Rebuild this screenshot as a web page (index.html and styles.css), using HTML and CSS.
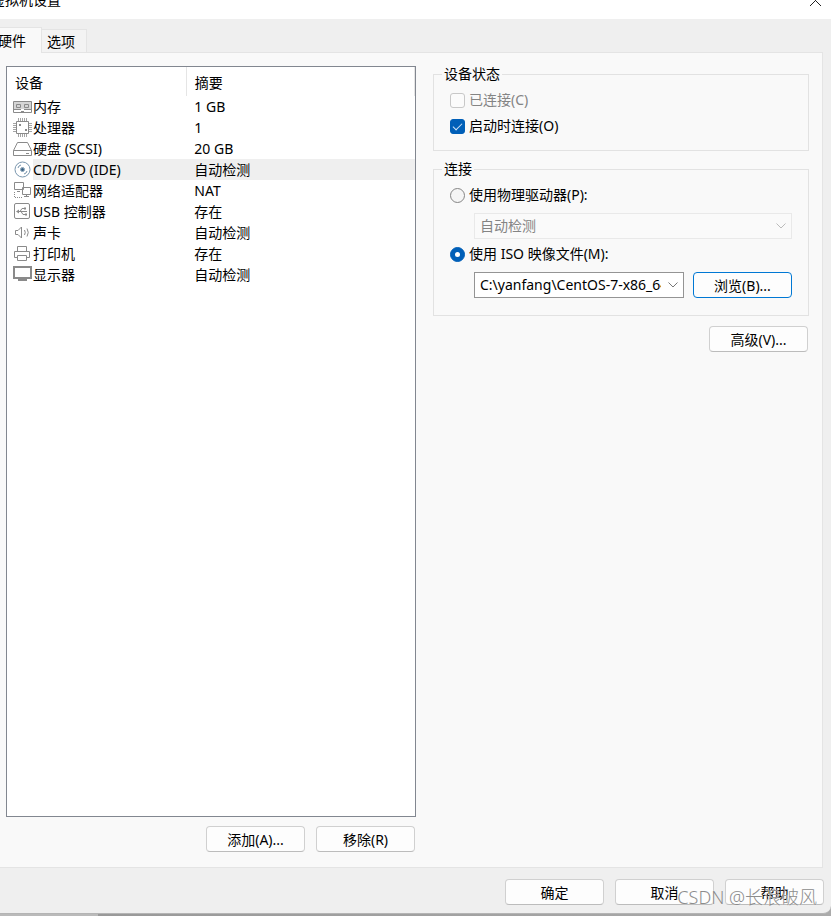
FILE: index.html
```html
<!DOCTYPE html>
<html lang="zh-CN">
<head>
<meta charset="utf-8">
<title>虚拟机设置</title>
<link rel="stylesheet" href="styles.css">
</head>
<body>
<main class="dialog">
  <header class="titlebar">
    <h1 class="title">虚拟机设置</h1>
    <button class="close" type="button" aria-label="关闭"><svg width="13" height="13" viewBox="0 0 13 13"><path d="M1 1L12 12M12 1L1 12"/></svg></button>
  </header>
  <nav class="tabs">
    <button class="tab tab-active" type="button">硬件</button>
    <button class="tab" type="button">选项</button>
  </nav>
  <div class="panel">
    <section class="hardware">
      <div class="list">
        <table class="devices">
          <thead><tr><th class="name-col">设备</th><th class="summary-col">摘要</th></tr></thead>
          <tbody>
            <tr><td><div class="device"><svg class="icon" viewBox="0 0 20 20"><path class="fill" d="M1 4H19V12H1Z"/><path d="M0.500 4.500H18.500V15.500H0.500ZM3.500 7.500H7.500V10.500H3.500ZM11.500 7.500H15.500V10.500H11.500ZM1 12.500H8M11 12.500H18M8 14.500H11"/></svg><span class="label">内存</span></div></td><td>1 GB</td></tr>
            <tr><td><div class="device"><svg class="icon" viewBox="0 0 20 20"><path d="M3.500 3.500H15.500V15.500H3.500Z"/><path class="pins" d="M5.500 0V3M7.500 0V3M9.500 0V3M11.500 0V3M13.500 0V3M5.500 16V19M7.500 16V19M9.500 16V19M11.500 16V19M13.500 16V19M0 5.500H3M0 7.500H3M0 9.500H3M0 11.500H3M0 13.500H3M16 5.500H19M16 7.500H19M16 9.500H19M16 11.500H19M16 13.500H19"/><path class="fill-dark" d="M6 6H8V8H6ZM12 11H14V13H12Z"/></svg><span class="label">处理器</span></div></td><td>1</td></tr>
            <tr><td><div class="device"><svg class="icon" viewBox="0 0 20 20"><path d="M4.500 3.500H14.500L18.500 11.500V16.500H0.500V11.500ZM0.500 11.500H18.500M13 14.500H16"/></svg><span class="label">硬盘 (SCSI)</span></div></td><td>20 GB</td></tr>
            <tr class="selected"><td><div class="device"><svg class="icon disc" viewBox="0 0 20 20"><circle cx="9.500" cy="9.500" r="7.500"/><circle cx="9.500" cy="9.500" r="2"/><path d="M5 8Q5.500 5.500 8 5M14 11Q13.500 13.500 11 14"/><circle class="dot" cx="9.500" cy="9.500" r="1.500"/></svg><span class="label">CD/DVD (IDE)</span></div></td><td>自动检测</td></tr>
            <tr><td><div class="device"><svg class="icon" viewBox="0 0 20 20"><path d="M1.500 1.500H10.500V8.500H1.500ZM4 10.500H7M9.500 6.500H17.500V13.500H9.500Z"/><path d="M11 15.500H16M13.500 14V15"/><path class="dash" d="M1.500 11V16.500H10"/></svg><span class="label">网络适配器</span></div></td><td>NAT</td></tr>
            <tr><td><div class="device"><svg class="icon" viewBox="0 0 20 20"><rect x="1.500" y="1.500" width="15" height="15" rx="1.500"/><path d="M4 9.500H14M7 9.500L9 6.500H11M8 9.500L10 12.500H12"/><path class="fill-dark" d="M3 9.500L6 7.500V11.500ZM11 5.500H13V7.500H11ZM12 11.500H14V13.500H12Z"/></svg><span class="label">USB 控制器</span></div></td><td>存在</td></tr>
            <tr><td><div class="device"><svg class="icon" viewBox="0 0 20 20"><path d="M2.500 7.500H5L8.500 4V15L5 11.500H2.500ZM11.500 7Q13 9.500 11.500 12M14 5.500Q16.500 9.500 14 13.500"/></svg><span class="label">声卡</span></div></td><td>自动检测</td></tr>
            <tr><td><div class="device"><svg class="icon" viewBox="0 0 20 20"><path d="M4.500 7V2.500H13.500V7M4 13.500H1.500V7.500H16.500V13.500H14M4.500 11.500H13.500V16.500H4.500Z"/></svg><span class="label">打印机</span></div></td><td>存在</td></tr>
            <tr><td><div class="device"><svg class="icon" viewBox="0 0 20 20"><path class="thick" d="M1 2H18V13H1Z"/><path class="thick" d="M5 15H14"/></svg><span class="label">显示器</span></div></td><td>自动检测</td></tr>
          </tbody>
        </table>
      </div>
      <div class="actions">
        <button class="btn" type="button">添加(A)...</button>
        <button class="btn" type="button">移除(R)</button>
      </div>
    </section>
    <section class="settings">
      <fieldset class="group status">
        <legend>设备状态</legend>
        <label class="choice disabled"><input type="checkbox" disabled>已连接(C)</label>
        <label class="choice"><input type="checkbox" checked>启动时连接(O)</label>
      </fieldset>
      <fieldset class="group connection">
        <legend>连接</legend>
        <label class="choice"><input type="radio" name="source">使用物理驱动器(P):</label>
        <div class="source-row">
          <div class="combo combo-disabled">
            <select aria-label="物理驱动器" disabled><option>自动检测</option></select>
            <svg class="arrow" width="10" height="6" viewBox="0 0 10 6"><path d="M0.500 0.500L5 5L9.500 0.500"/></svg>
          </div>
        </div>
        <label class="choice"><input type="radio" name="source" checked>使用 ISO 映像文件(M):</label>
        <div class="source-row">
          <div class="combo">
            <select aria-label="ISO 映像文件"><option>C:\yanfang\CentOS-7-x86_64</option></select>
            <svg class="arrow" width="10" height="6" viewBox="0 0 10 6"><path d="M0.500 0.500L5 5L9.500 0.500"/></svg>
          </div>
          <button class="btn btn-focus" type="button">浏览(B)...</button>
        </div>
      </fieldset>
      <button class="btn advanced" type="button">高级(V)...</button>
    </section>
  </div>
  <footer class="footer">
    <button class="btn" type="button">确定</button>
    <button class="btn" type="button">取消</button>
    <button class="btn" type="button">帮助</button>
    <span class="watermark">CSDN @长浪破风</span>
  </footer>
</main>
</body>
</html>
```
FILE: styles.css
```css
* { box-sizing: border-box; }

body {
  margin: 0;
  height: 100vh;
  padding-bottom: 2px;
  overflow: hidden;
  background: linear-gradient(90deg, #bababa 98px, #999 98px, #ababab);
  color: #000;
  font: 14px/20px "Noto Sans", "Noto Sans CJK SC", sans-serif;
}

button, select, input { font: inherit; color: inherit; margin: 0; }

.dialog {
  position: relative;
  display: flex;
  flex-direction: column;
  height: 100%;
  overflow: hidden;
  background: #efefef;
  border-bottom: 1px solid #b4b4b4;
  border-bottom-right-radius: 8px;
}

.titlebar {
  display: flex;
  flex: none;
  justify-content: space-between;
  align-items: flex-end;
  height: 19px;
  padding: 0 9px 9px 0;
  background: #fff;
}

.title { margin: 0 0 0 -9px; font: inherit; }

.close {
  display: flex;
  padding: 0 0 3px;
  border: 0;
  background: none;
}

.close svg { fill: none; stroke: #222; }

.tabs {
  display: flex;
  flex: none;
  align-items: flex-end;
  height: 33px;
  padding-top: 8px;
}

.tab {
  height: 23px;
  padding: 2px 11px 0 5px;
  border: 1px solid #e4e4e4;
  border-width: 1px 1px 0 0;
  background: #f3f3f3;
}

.tab-active {
  position: relative;
  height: 26px;
  margin: 0 0 -1px -7px;
  padding: 0 15px 0 5px;
  background: #f9f9f9;
}

.panel {
  display: flex;
  flex: 1;
  gap: 17px;
  min-height: 0;
  margin-right: 8px;
  padding: 13px 13px 15px 6px;
  border: 1px solid #e4e4e4;
  border-left: 0;
  background: #f9f9f9;
}

.hardware {
  display: flex;
  flex: 410 1 0;
  flex-direction: column;
  min-width: 0;
}

.list {
  flex: 1;
  border: 1px solid #828790;
  background: #fff;
}

.devices {
  width: 100%;
  border-collapse: collapse;
  table-layout: fixed;
}

th { height: 29px; padding: 3px 8px 0; font-weight: normal; text-align: left; }
.name-col { width: 44%; border-right: 1px solid #e5e5e5; }
.summary-col { border-right: 1px solid #e5e5e5; }
td { height: 21px; padding: 0 8px; line-height: 21px; }
td:first-child { padding: 0 0 0 6px; }

.device { display: flex; align-items: center; }
.label { flex: 1; }

.selected .label, .selected td:last-child { background: #efefef; }

.icon {
  flex: none;
  width: 20px;
  height: 20px;
  fill: none;
  stroke: #8a8a8a;
}

.icon .fill { fill: #d5d5d5; stroke: none; }
.icon .fill-dark { fill: #8a8a8a; stroke: none; }
.icon .thick { stroke-width: 2; }
.icon .pins { stroke: #a5a5a5; }
.icon .dash { stroke-dasharray: 1 1; }
.disc { stroke: #7895ad; }
.disc .dot { fill: #345f82; stroke: none; }

.actions {
  display: flex;
  justify-content: flex-end;
  gap: 11px;
  padding: 9px 1px 0 0;
}

.btn {
  flex: none;
  width: 99px;
  height: 26px;
  padding: 2px 0 0;
  border: 1px solid #d0d0d0;
  border-bottom-color: #bcbcbc;
  border-radius: 4px;
  background: #fdfdfd;
  line-height: 20px;
}

.btn-focus { border-color: #0078d4; }

.settings {
  display: flex;
  flex: 376 1 0;
  flex-direction: column;
  min-width: 0;
}

.group {
  min-width: 0;
  margin: 0 0 10px;
  padding: 0 16px;
  border: 1px solid #e2e2e2;
}

legend { margin-left: -8px; padding: 0 2px; line-height: 16px; }

.status { padding-top: 5px; padding-bottom: 11px; }
.connection { padding-top: 3px; padding-bottom: 17px; }

.choice { display: flex; align-items: center; gap: 4px; height: 30px; }
.status .choice { height: 26px; }
.disabled { color: #848484; }

.choice input {
  display: grid;
  flex: none;
  width: 15px;
  height: 15px;
  place-items: center;
  border: 1px solid #858585;
  border-radius: 3px;
  background: #f5f5f5;
  appearance: none;
}

.choice input:disabled { border-color: #c8c8c8; background: #fbfbfb; }
.choice input:checked { border-color: #005fb8; background: #005fb8; }

.choice input[type="checkbox"]:checked::after {
  width: 8px;
  height: 4px;
  margin-bottom: 2px;
  border: solid #cfe4f7;
  border-width: 0 0 1px 1px;
  content: "";
  transform: rotate(-45deg);
}

.choice input[type="radio"] { border-radius: 50%; }

.choice input[type="radio"]:checked::after {
  width: 5px;
  height: 5px;
  border-radius: 50%;
  background: #fff;
  content: "";
}

.source-row { display: flex; gap: 9px; padding: 3px 0 0 24px; }

.combo { display: grid; flex: 1; min-width: 0; align-items: center; }

.combo select {
  grid-area: 1 / 1;
  width: 100%;
  height: 26px;
  padding: 0 22px 0 5px;
  border: 1px solid #949494;
  border-radius: 0;
  background: #fff;
  appearance: none;
}

.combo-disabled select {
  border-color: #e9e9e9;
  background: #fafafa;
  color: #848484;
  opacity: 1;
}

.arrow {
  grid-area: 1 / 1;
  justify-self: end;
  margin-right: 6px;
  fill: none;
  stroke: #777;
  pointer-events: none;
}

.combo-disabled .arrow { stroke: #bbb; }

.advanced { align-self: flex-end; margin-right: 1px; }

.footer {
  display: flex;
  flex: none;
  justify-content: flex-end;
  gap: 11px;
  padding: 11px 7px 8px;
}

.watermark {
  position: absolute;
  right: 14px;
  bottom: 4px;
  color: #8c8c8c;
  font-size: 18px;
  font-weight: 300;
  line-height: 24px;
  text-shadow: 0 0 1px #fff;
}
```
